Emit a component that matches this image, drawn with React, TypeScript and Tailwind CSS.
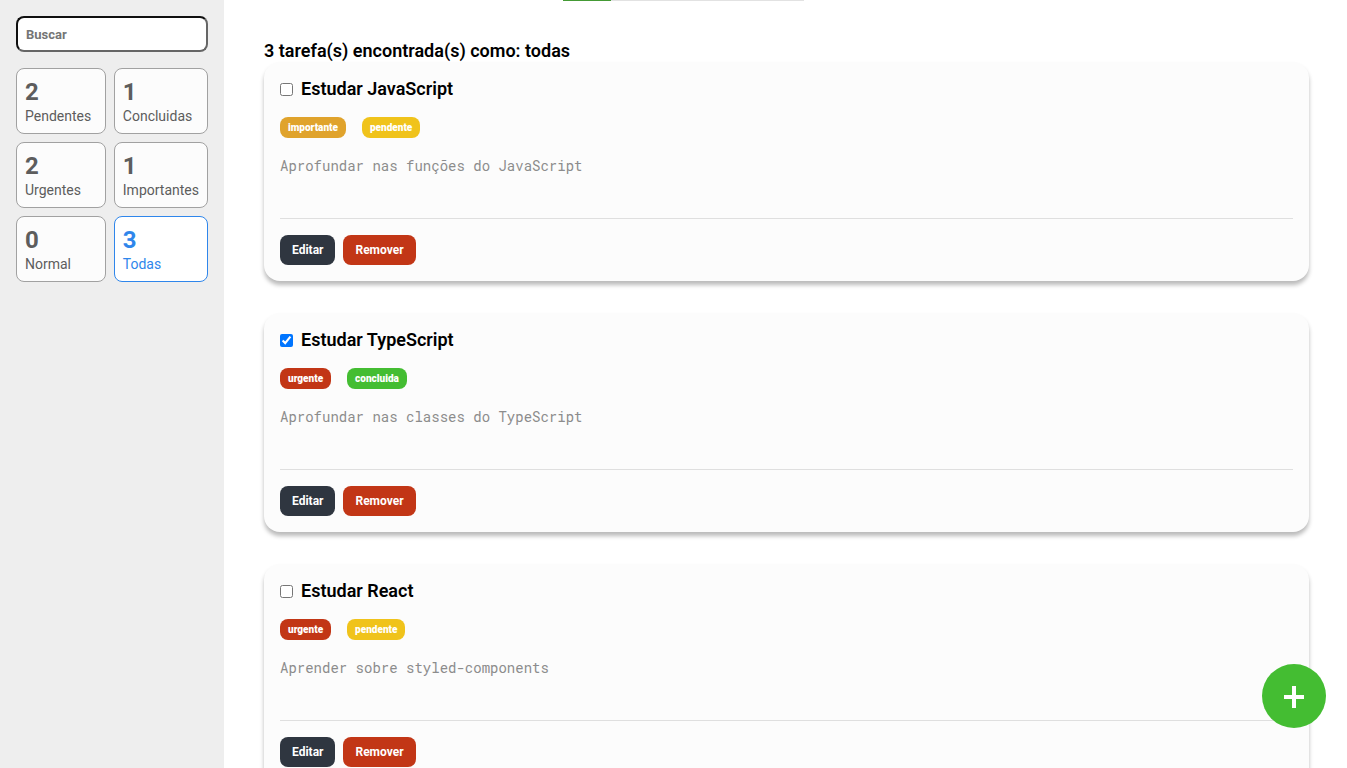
import { useState } from "react";

type Priority = "importante" | "urgente";

interface Task {
  id: number;
  title: string;
  description: string;
  priority: Priority;
  done: boolean;
}

const initialTasks: Task[] = [
  { id: 1, title: "Estudar JavaScript", description: "Aprofundar nas funções do JavaScript", priority: "importante", done: false },
  { id: 2, title: "Estudar TypeScript", description: "Aprofundar nas classes do TypeScript", priority: "urgente", done: true },
  { id: 3, title: "Estudar React", description: "Aprender sobre styled-components", priority: "urgente", done: false },
];

const tagColors: Record<string, string> = {
  importante: "bg-[#e0a32c]",
  urgente: "bg-[#c23616]",
  pendente: "bg-[#f0c31b]",
  concluida: "bg-[#44bd32]",
};

function Tag({ label }: { label: string }) {
  return (
    <span className={`h-[21px] rounded-lg px-2 text-[10px] leading-[21px] font-black text-white ${tagColors[label]}`}>
      {label}
    </span>
  );
}

function FilterCard({ count, label, active, onSelect }: { count: number; label: string; active: boolean; onSelect: () => void }) {
  const tone = active ? "border-[#2f86eb] bg-white text-[#2f86eb]" : "border-[#a1a1a1] bg-[#fcfcfc] text-[#5d5d5d]";
  return (
    <button type="button" aria-pressed={active} onClick={onSelect} className={`rounded-lg border p-2 text-left ${tone}`}>
      <span className="block text-2xl leading-[30px] font-bold">{count}</span>
      <span className="block text-sm leading-[18px]">{label}</span>
    </button>
  );
}

function TaskCard({ task, onToggle, onRemove }: { task: Task; onToggle: () => void; onRemove: () => void }) {
  return (
    <article className="rounded-2xl bg-[#fcfcfc] p-4 shadow-[0_4px_4px_rgba(0,0,0,0.27)]">
      <label className="flex items-center gap-2">
        <input type="checkbox" checked={task.done} onChange={onToggle} className="mt-px size-[13px]" />
        <span className="text-lg leading-[21px] font-semibold">{task.title}</span>
      </label>
      <div className="mt-[18px] flex gap-4">
        <Tag label={task.priority} />
        <Tag label={task.done ? "concluida" : "pendente"} />
      </div>
      <p className="mt-[18px] h-[63px] border-b border-[#dfdfdf] font-['Roboto_Mono','Liberation_Mono',monospace] text-sm text-[#8c8c8c]">
        {task.description}
      </p>
      <div className="mt-4 flex gap-2 text-xs font-bold text-white">
        <button type="button" className="h-[30px] rounded-lg bg-[#2f3640] px-3">Editar</button>
        <button type="button" onClick={onRemove} className="h-[30px] rounded-lg bg-[#c23616] px-3">Remover</button>
      </div>
    </article>
  );
}

export default function App() {
  const [tasks, setTasks] = useState(initialTasks);
  const [filter, setFilter] = useState("Todas");
  const [query, setQuery] = useState("");

  const filters: { label: string; match: (t: Task) => boolean }[] = [
    { label: "Pendentes", match: (t) => !t.done },
    { label: "Concluidas", match: (t) => t.done },
    { label: "Urgentes", match: (t) => t.priority === "urgente" },
    { label: "Importantes", match: (t) => t.priority === "importante" },
    { label: "Normal", match: () => false },
    { label: "Todas", match: () => true },
  ];
  const current = filters.find((f) => f.label === filter)!;
  const visible = tasks.filter((t) => current.match(t) && t.title.toLowerCase().includes(query.toLowerCase()));

  return (
    <div className="relative flex h-screen bg-white font-['Roboto',sans-serif] text-black">
      <aside className="w-56 shrink-0 bg-[#eeeeee] p-4">
        <input
          type="search"
          aria-label="Buscar"
          placeholder="Buscar"
          value={query}
          onChange={(e) => setQuery(e.target.value)}
          className="h-9 w-full rounded-lg border-2 border-t-[#101010] border-r-[#666666] border-b-[#666666] border-l-[#101010] bg-white px-2 text-[13px] font-bold placeholder:text-[#757575]"
        />
        <nav className="mt-4 grid grid-cols-[1fr_1fr] gap-2">
          {filters.map((f) => (
            <FilterCard
              key={f.label}
              label={f.label}
              count={tasks.filter(f.match).length}
              active={f.label === filter}
              onSelect={() => setFilter(f.label)}
            />
          ))}
        </nav>
      </aside>

      <main className="flex-1 overflow-y-auto pt-10 pr-[38px] pb-10 pl-10 [scrollbar-width:none]">
        <h1 className="text-lg leading-[22px] font-semibold">
          {visible.length} tarefa(s) encontrada(s) como: {filter.toLowerCase()}
        </h1>
        <div className="flex flex-col gap-8">
          {visible.map((t) => (
            <TaskCard
              key={t.id}
              task={t}
              onToggle={() => setTasks(tasks.map((o) => (o.id === t.id ? { ...o, done: !o.done } : o)))}
              onRemove={() => setTasks(tasks.filter((o) => o.id !== t.id))}
            />
          ))}
        </div>
      </main>

      {/* Remaining time of the notification sliding out above the page */}
      <div className="absolute top-0 left-[563px] h-px w-[241px] bg-[#e2e2e2]">
        <div className="h-px w-1/5 bg-[#449a35]" />
      </div>

      <button
        type="button"
        aria-label="Adicionar tarefa"
        className="absolute right-[21px] bottom-10 flex size-16 items-center justify-center rounded-full bg-[#44bd32] pt-0.5 text-white"
      >
        <svg viewBox="0 0 20 22" className="h-[22px] w-5" fill="currentColor" aria-hidden="true">
          <path d="M8 0h4v9h8v4h-8v9H8v-9H0V9h8z" />
        </svg>
      </button>
    </div>
  );
}
